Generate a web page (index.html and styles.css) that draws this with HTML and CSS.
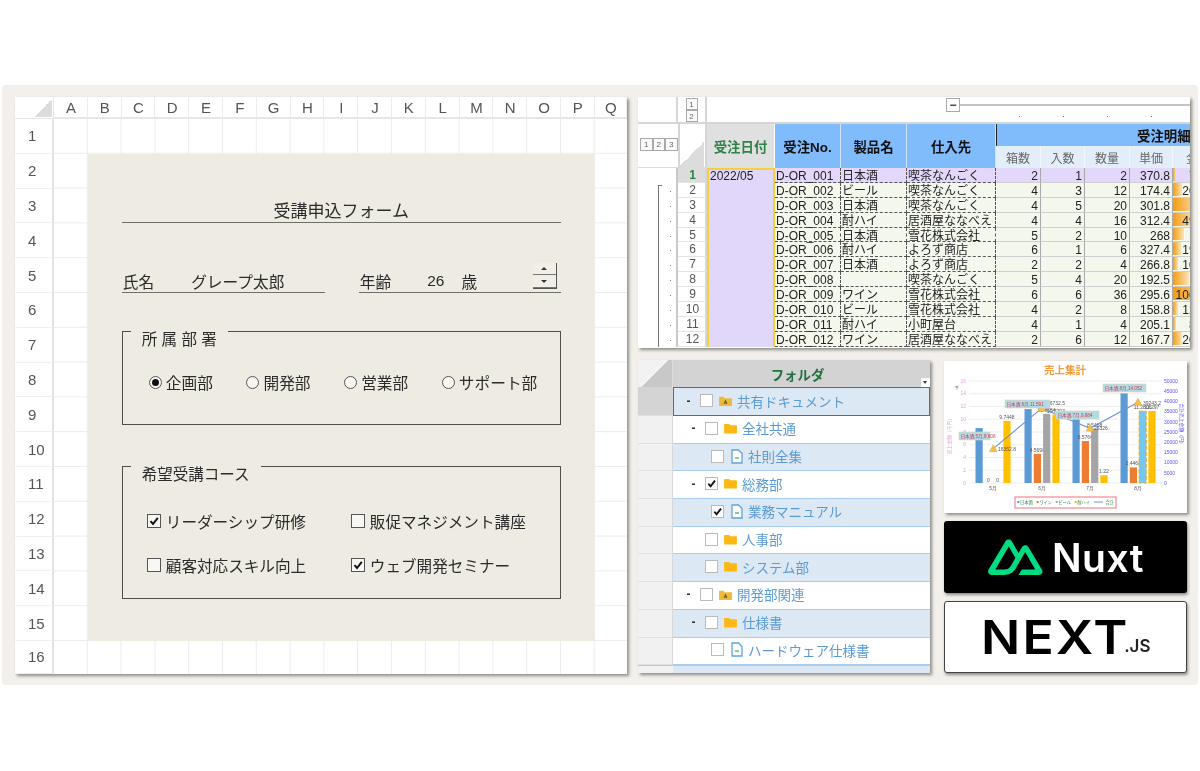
FILE: index.html
```html
<!DOCTYPE html>
<html lang="ja">
<head>
<meta charset="utf-8">
<title>受講申込フォーム</title>
<link rel="stylesheet" href="styles.css">
</head>
<body>
<main class="panel">
  <section class="sheet">
    <div class="corner"></div>
    <div class="ch">A</div><div class="ch">B</div><div class="ch">C</div><div class="ch">D</div><div class="ch">E</div><div class="ch">F</div><div class="ch">G</div><div class="ch">H</div><div class="ch">I</div><div class="ch">J</div><div class="ch">K</div><div class="ch">L</div><div class="ch">M</div><div class="ch">N</div><div class="ch">O</div><div class="ch">P</div><div class="ch">Q</div>
    <div class="rh">1</div><div class="rh">2</div><div class="rh">3</div><div class="rh">4</div><div class="rh">5</div><div class="rh">6</div><div class="rh">7</div><div class="rh">8</div><div class="rh">9</div><div class="rh">10</div><div class="rh">11</div><div class="rh">12</div><div class="rh">13</div><div class="rh">14</div><div class="rh">15</div><div class="rh">16</div>
    <div class="cells"></div>
    <form class="form">
      <h1 class="form-title">受講申込フォーム</h1>
      <div class="person">
        <div class="field name"><span>氏名</span><span class="name-value">グレープ太郎</span></div>
        <div class="field age">
          <span>年齢</span><span class="age-value">26</span><span class="age-unit">歳</span>
          <div class="spinner"><div class="spin-btn"><i class="tri up"></i></div><div class="spin-btn"><i class="tri down"></i></div></div>
        </div>
      </div>
      <fieldset class="group dept">
        <legend>所 属 部 署</legend>
        <div class="radios">
          <div class="radio"><i class="rd on"></i>企画部</div>
          <div class="radio"><i class="rd"></i>開発部</div>
          <div class="radio"><i class="rd"></i>営業部</div>
          <div class="radio"><i class="rd"></i>サポート部</div>
        </div>
      </fieldset>
      <fieldset class="group course">
        <legend>希望受講コース</legend>
        <div class="checks">
          <div class="check"><i class="cb"><svg viewBox="0 0 12 12"><path d="M2.500 6.200 5 9 9.800 2.800"/></svg></i>リーダーシップ研修</div>
          <div class="check"><i class="cb"></i>販促マネジメント講座</div>
          <div class="check"><i class="cb"></i>顧客対応スキル向上</div>
          <div class="check"><i class="cb"><svg viewBox="0 0 12 12"><path d="M2.500 6.200 5 9 9.800 2.800"/></svg></i>ウェブ開発セミナー</div>
        </div>
      </fieldset>
    </form>
  </section>

  <div class="right">
    <section class="orders">
      <div class="o-top">
        <div class="o-top-a"></div>
        <div class="o-top-b"><span class="lv">1</span><span class="lv">2</span></div>
        <div class="o-top-c"><span class="lv minus">−</span><span class="o-rule"></span>
          <div class="o-dots"><i></i><i></i><i></i><i></i></div>
        </div>
      </div>
      <div class="o-grid" id="orders">
        <div class="o-levels"><span class="lv">1</span><span class="lv">2</span><span class="lv">3</span></div>
        <div class="o-corner"></div>
        <div class="oh date">受注日付</div>
        <div class="oh blue">受注No.</div>
        <div class="oh blue">製品名</div>
        <div class="oh blue">仕入先</div>
        <div class="oh blue group-h">受注明細</div>
        <div class="osub">箱数</div><div class="osub">入数</div><div class="osub">数量</div><div class="osub">単価</div><div class="osub amount-h">金額</div>
        <div class="outline"><div class="bracket"></div></div>
        <div class="date-cell">2022/05</div>
      </div>
    </section>

    <div class="lower">
      <section class="tree">
        <div class="t-corner"></div>
        <div class="t-head">フォルダ<i class="t-filter"></i></div>
        <div class="t-rh first"></div>
        <div class="t-row blue sel l0"><b>-</b><i class="tc"></i><svg class="ic" viewBox="0 0 14 12"><path class="yf" d="M0 2h5l1 1.500h8V12H0z"/><path class="dk" d="M7 5 9.200 9.500H4.800z"/></svg><span>共有ドキュメント</span></div>
        <div class="t-rh"></div>
        <div class="t-row l1"><b>-</b><i class="tc"></i><svg class="ic" viewBox="0 0 14 12"><path class="of" d="M1 1h4.500l1.500 1.500h6.500q.5 0 .5.5v8q0 .5-.5.500H.5q-.5 0-.5-.5V2q0-1 1-1z"/></svg><span>全社共通</span></div>
        <div class="t-rh"></div>
        <div class="t-row blue l2"><i class="tc"></i><svg class="ic doc" viewBox="0 0 12 15"><path class="ds" d="M1 1h6.500L11 4.500V14H1z"/><path class="dg" d="M4 9h4"/></svg><span>社則全集</span></div>
        <div class="t-rh"></div>
        <div class="t-row l1"><b>-</b><i class="tc"><svg viewBox="0 0 12 12"><path d="M2.500 6.200 5 9 9.800 2.800"/></svg></i><svg class="ic" viewBox="0 0 14 12"><path class="of" d="M1 1h4.500l1.500 1.500h6.500q.5 0 .5.5v8q0 .5-.5.500H.5q-.5 0-.5-.5V2q0-1 1-1z"/></svg><span>総務部</span></div>
        <div class="t-rh"></div>
        <div class="t-row blue l2"><i class="tc"><svg viewBox="0 0 12 12"><path d="M2.500 6.200 5 9 9.800 2.800"/></svg></i><svg class="ic doc" viewBox="0 0 12 15"><path class="ds" d="M1 1h6.500L11 4.500V14H1z"/><path class="dg" d="M4 9h4"/></svg><span>業務マニュアル</span></div>
        <div class="t-rh"></div>
        <div class="t-row l1 nob"><i class="tc"></i><svg class="ic" viewBox="0 0 14 12"><path class="of" d="M1 1h4.500l1.500 1.500h6.500q.5 0 .5.5v8q0 .5-.5.500H.5q-.5 0-.5-.5V2q0-1 1-1z"/></svg><span>人事部</span></div>
        <div class="t-rh"></div>
        <div class="t-row blue l1 nob"><i class="tc"></i><svg class="ic" viewBox="0 0 14 12"><path class="of" d="M1 1h4.500l1.500 1.500h6.500q.5 0 .5.5v8q0 .5-.5.500H.5q-.5 0-.5-.5V2q0-1 1-1z"/></svg><span>システム部</span></div>
        <div class="t-rh"></div>
        <div class="t-row l0"><b>-</b><i class="tc"></i><svg class="ic" viewBox="0 0 14 12"><path class="yf" d="M0 2h5l1 1.500h8V12H0z"/><path class="dk" d="M7 5 9.200 9.500H4.800z"/></svg><span>開発部関連</span></div>
        <div class="t-rh"></div>
        <div class="t-row blue l1"><b>-</b><i class="tc"></i><svg class="ic" viewBox="0 0 14 12"><path class="of" d="M1 1h4.500l1.500 1.500h6.500q.5 0 .5.5v8q0 .5-.5.500H.5q-.5 0-.5-.5V2q0-1 1-1z"/></svg><span>仕様書</span></div>
        <div class="t-rh"></div>
        <div class="t-row l2"><i class="tc"></i><svg class="ic doc" viewBox="0 0 12 15"><path class="ds" d="M1 1h6.500L11 4.500V14H1z"/><path class="dg" d="M4 9h4"/></svg><span>ハードウェア仕様書</span></div>
        <div class="t-rh tail"></div>
        <div class="t-row blue tail"></div>
      </section>

      <div class="cards">
        <section class="chart" id="chart"></section>
        <section class="logo nuxt">
          <svg class="nuxt-mark" viewBox="0 0 61 40"><path fill-rule="evenodd" d="M33.900 40h22.500c.7 0 1.400-.2 2-.5.6-.3 1.200-.8 1.500-1.400.4-.6.6-1.300.6-2 0-.7-.2-1.400-.6-2L44.800 8.900c-.4-.6-.9-1.100-1.500-1.400-.6-.3-1.300-.5-2-.5s-1.400.2-2 .5c-.6.3-1.100.8-1.500 1.400l-3.900 6.700L26.400 2.500c-.4-.6-.9-1.100-1.500-1.400-.6-.3-1.300-.5-2-.5s-1.400.2-2 .5c-.6.3-1.100.8-1.500 1.400L.6 34c-.4.6-.6 1.300-.6 2 0 .7.2 1.400.6 2 .4.6.9 1.100 1.500 1.400.6.3 1.300.5 2 .5h14.100c5.600 0 9.700-2.500 12.500-7.200l6.900-11.900 3.700-6.300L52.400 34H37.500l-3.600 6zM17.900 34H8.100L23 8.300l7.400 12.900-5 8.600c-1.900 3.100-4.100 4.200-7.500 4.200z"/></svg>
          <span class="nuxt-word">Nuxt</span>
        </section>
        <section class="logo next"><span class="next-word">NEXT</span><span class="next-js">.JS</span></section>
      </div>
    </div>
  </div>
</main>
<script src="app.js"></script>
</body>
</html>
```
FILE: styles.css
```css
* { box-sizing: border-box; }
html, body { margin: 0; height: 100%; background: #fff; }
body { padding: 85px 2px 86px; font-family: "Liberation Sans", "Noto Sans CJK JP", sans-serif; color: #222; overflow: hidden; }
i { font-style: normal; display: block; }

.panel { height: 600px; background: #f3efea; border-radius: 4px; padding: 12px 8px 11px 13px; display: flex; gap: 11px; filter: blur(.35px); }

/* left sheet */
.sheet { width: 612px; height: 577px; background: #fff; box-shadow: 2px 2px 3px #8d8d88; display: grid; grid-template-columns: 39px repeat(16, 33.8px) 32.200px; grid-template-rows: 22px repeat(15, 34.800px) 33px; }
.corner { border-right: 1px solid #e4e4e4; border-bottom: 1px solid #e4e4e4; background: linear-gradient(135deg, #fff 50%, #dcdcdc 50%); background-size: 18px 18px; background-position: right 1px bottom 1px; background-repeat: no-repeat; }
.ch { display: flex; align-items: center; justify-content: center; font-size: 15px; color: #555; border-right: 1px solid #ececec; border-bottom: 2px solid #e6e6e6; padding-left: 1px; }
.rh { grid-column: 1; display: flex; align-items: center; padding-left: 13px; font-size: 15px; color: #555; border-right: 2px solid #e4e4e4; border-bottom: 1px solid #f0f0f0; }
.cells { grid-column: 2 / -1; grid-row: 2 / -1; background-image: linear-gradient(to right, #ececec 1px, transparent 1px), linear-gradient(to bottom, #ececec 1px, transparent 1px); background-size: 33.800px 34.800px; background-position: -1px -1px; }
.form { grid-column: 3 / 18; grid-row: 3 / 17; z-index: 1; background: #edebe2; padding: 0 34px; display: flex; flex-direction: column; }
.form-title { margin: 40px 0 0; height: 29px; border-bottom: 1px solid #6f6f68; font-size: 17px; line-height: 36px; font-weight: 400; text-align: center; color: #2b2b2b; }
.person { margin-top: 40px; display: flex; justify-content: space-between; align-items: flex-end; }
.field { position: relative; display: flex; height: 30px; padding: 8px 0 0 1px; align-items: center; font-size: 15.700px; border-bottom: 1px solid #6f6f68; color: #2b2b2b; }
.name { width: 203px; }
.age { width: 202px; }
.name-value { margin-left: 37px; }
.age-value { margin-left: 36px; font-size: 15.500px; }
.age-unit { margin-left: 17px; }
.spinner { position: absolute; right: 4px; bottom: 3px; width: 24px; height: 26px; display: flex; flex-direction: column; gap: 1px; border-right: 1px solid #555; border-bottom: 1px solid #555; }
.spin-btn { flex: 1; display: flex; align-items: center; justify-content: center; border-bottom: 1px solid #777; background: #f0eee6; }
.tri { width: 0; height: 0; border-left: 3px solid transparent; border-right: 3px solid transparent; }
.tri.up { border-bottom: 3px solid #333; }
.tri.down { border-top: 3px solid #333; }
.group { margin: 0; padding: 0; border: 1px solid #4f4f4a; min-width: 0; }
.group legend { margin-left: 8px; padding: 16px 11px 0; font-size: 15.500px; line-height: 16px; color: #2b2b2b; white-space: pre; }
.dept { margin-top: 23px; height: 109px; }
.course { margin-top: 26px; height: 148px; }
.radios { display: flex; padding: 22px 0 0 26px; font-size: 15.700px; }
.radio { display: flex; align-items: center; gap: 4px; width: 97.700px; height: 26px; color: #2b2b2b; white-space: nowrap; }
.rd { width: 13px; height: 13px; border: 1px solid #555; border-radius: 50%; background: #f8f7f3; flex: none; position: relative; }
.rd.on::after { content: ""; position: absolute; inset: 2px; background: #111; border-radius: 50%; }
.checks { display: grid; grid-template-columns: 204px 1fr; padding: 25px 0 0 24px; row-gap: 18px; font-size: 15.600px; }
.check { display: flex; align-items: center; gap: 5px; height: 26px; color: #2b2b2b; white-space: nowrap; }
.cb { width: 14px; height: 14px; border: 1px solid #555; background: #f8f7f3; flex: none; }
.cb svg, .tc svg { display: block; width: 100%; height: 100%; }
.cb path, .tc path { fill: none; stroke: #111; stroke-width: 2; }

/* right */
.right { width: 552px; display: flex; flex-direction: column; gap: 12px; }
.orders { height: 251px; background: #fff; box-shadow: 2px 2px 3px #8d8d88; overflow: hidden; }
.o-top { display: flex; height: 27px; border-bottom: 2px solid #d6d6d6; }
.o-top-a { width: 40px; border-right: 2px solid #d6d6d6; }
.o-top-b { width: 29px; border-right: 2px solid #d6d6d6; display: flex; flex-direction: column; align-items: center; padding-top: 1px; }
.o-top-c { flex: 1; position: relative; padding-left: 239px; display: flex; align-items: flex-start; padding-top: 1px; }
.lv { display: flex; align-items: center; justify-content: center; width: 12px; height: 12px; border: 1px solid #aaa; font-size: 8px; color: #666; background: #fafafa; }
.minus { width: 14px; height: 14px; font-size: 12px; color: #333; font-weight: 700; background: #fff; }
.o-rule { flex: 1; height: 2px; margin-top: 6px; background: #c4c4c4; }
.o-dots { position: absolute; left: 312px; top: 19px; display: flex; gap: 43px; }
.o-dots i { width: 1px; height: 1px; background: #777; }
.o-grid { display: grid; grid-template-columns: 40px 29px 68px 66px 66px 89px 45px 44px 45px 43px 17px; grid-template-rows: 22px 22px repeat(12, 14.900px); }
.o-levels { grid-column: 1; grid-row: 1 / 3; display: flex; align-items: center; padding: 0 0 3px 2px; background: #fff; border-bottom: 1px solid #ddd; }
.o-levels .lv { width: 12.500px; height: 13px; }
.o-corner { grid-column: 2; grid-row: 1 / 3; background: linear-gradient(135deg, #fff 50%, #dcdcdc 50%); background-size: 25px 25px; background-position: right 1px bottom 0; background-repeat: no-repeat; border-left: 2px solid #d6d6d6; border-right: 2px solid #d6d6d6; border-bottom: 1px solid #ddd; }
.oh { grid-row: 1 / 3; display: flex; align-items: center; justify-content: center; font-size: 13.400px; font-weight: 700; color: #111; border-right: 1px solid #d2e3f8; }
.oh.date { background: #e0e0e0; color: #2f8248; border-right: 1px solid #fff; }
.oh.blue { background: #80bbfc; }
.oh.group-h { grid-column: 7 / -1; grid-row: 1; border-left: 1px solid #222; border-right: 0; white-space: nowrap; overflow: hidden; padding-left: 140px; justify-content: flex-start; }
.osub { grid-row: 2; background: #e3eefa; color: #666; font-size: 12px; display: flex; align-items: center; justify-content: center; border-right: 1px solid #f3f7fc; white-space: nowrap; overflow: hidden; }
.amount-h { justify-content: flex-start; padding-left: 13px; border-right: 0; }
.outline { grid-column: 1; grid-row: 3 / 15; position: relative; border-right: 2px solid #c9c9c9; }
.bracket { position: absolute; left: 20px; top: 17px; bottom: 0; width: 4px; border-left: 1px solid #777; border-top: 1px solid #777; }
.rn { grid-column: 2; display: flex; align-items: center; justify-content: center; font-size: 12px; color: #555; border-right: 2px solid #d6d6d6; border-bottom: 1px solid #e4e4e4; padding-left: 2px; position: relative; }
.rn::before { content: ""; position: absolute; left: -8px; top: 8px; width: 1px; height: 1px; background: #777; }
.rn.first { background: #dcdcdc; color: #2f8248; font-weight: 700; }
.rn.first::before { display: none; }
.date-cell { grid-column: 3; grid-row: 3 / 15; background: #e0d7fa; border-left: 2px solid #f5cf3c; border-right: 2px solid #f5cf3c; border-top: 2px solid #f5cf3c; font-size: 12px; padding-left: 1px; line-height: 13px; color: #222; }
.c { font-size: 12px; line-height: 14px; height: 100%; background: #f4f7ec; border-bottom: 1px dashed #555; border-right: 1px dashed #555; color: #222; white-space: nowrap; padding: 1px 1px 0; }
.c.hl { background: #e3d8fb; }
.c.num { text-align: right; padding-right: 2px; border-right: 1px solid #a9a9a9; border-bottom: 1px solid #cfcfcf; }
.c.amount { padding: 1px 0 0; border-right: 0; border-bottom: 1px solid #cfcfcf; position: relative; overflow: hidden; }
.bar { position: absolute; left: 0; top: 0; bottom: 1px; background: linear-gradient(to right, #f39c12, #fde3b8); }
.val { position: relative; display: block; width: 46px; text-align: right; }

.lower { flex: 1; display: flex; gap: 14px; }
.tree { width: 292px; height: 313px; overflow: hidden; background: #fff; box-shadow: 2px 2px 3px #8d8d88; display: grid; grid-template-columns: 35px 1fr; grid-template-rows: 27px 29px repeat(9, 27.700px) 8px; }
.t-corner { background: linear-gradient(135deg, #f2f2f2 50%, #c8c8c8 50%); border-right: 1px solid #ddd; background-color: #f2f2f2; }
.t-head { position: relative; background: #d3d3d3; display: flex; align-items: center; justify-content: center; font-size: 13.400px; font-weight: 700; color: #23703f; padding-right: 8px; }
.t-filter { position: absolute; right: 0; bottom: 0; width: 9px; height: 9px; background: #fff; }
.t-filter::after { content: ""; position: absolute; left: 2px; top: 3px; border-left: 2.500px solid transparent; border-right: 2.500px solid transparent; border-top: 3px solid #336; }
.t-rh { background: #f1f1f1; border-bottom: 1px solid #e0e0e0; border-right: 1px solid #d8d8d8; }
.t-rh.first { background: #d4d4d4; }
.t-row { display: flex; align-items: center; background: #fff; border-bottom: 1px solid #a8cdee; font-size: 13.500px; color: #5b9bd5; white-space: nowrap; padding-bottom: 2px; }
.t-row.blue { background: #dce9f5; }
.t-row.sel { border: 1px solid #2e8b57; }
.t-row b { width: 7px; font-weight: 700; color: #333; font-size: 12px; text-align: center; }
.t-row.l0 { padding-left: 12px; }
.t-row.l1 { padding-left: 17px; }
.t-row.l1.nob { padding-left: 32px; }
.t-row.l2 { padding-left: 38px; }
.t-row.sel.l0 { padding-left: 11px; }
.tc { width: 13px; height: 13px; margin-left: 8px; border: 1px solid #bbb; background: #fff; flex: none; }
.t-row.l2 .tc, .t-row.nob .tc { margin-left: 0; }
.ic { width: 13px; height: 11px; margin: 0 5px 0 6px; flex: none; }
.ic.doc { width: 12px; height: 15px; margin-left: 7px; }
.yf { fill: #ecb93c; }
.dk { fill: #6b6338; }
.of { fill: #fdb813; }
.ds { fill: #fff; stroke: #5ba5dc; stroke-width: 1.300; }
.dg { stroke: #5fb58e; stroke-width: 1.500; fill: none; }
.t-row.tail, .t-rh.tail { border: 0; border-top: 1px solid #a8cdee; }

.cards { width: 243px; display: flex; flex-direction: column; gap: 8px; padding-top: 1px; }
.chart { height: 152px; background: #fff; box-shadow: 2px 2px 3px #8d8d88; }
.chart svg { display: block; width: 243px; height: 152px; filter: blur(.55px); }
.logo { flex: none; display: flex; align-items: flex-end; border-radius: 3px; box-shadow: 1px 2px 3px #8d8d88; }
.nuxt { height: 72px; background: #000; align-items: center; padding-left: 44px; gap: 9px; }
.nuxt-mark { width: 55px; height: 36px; fill: #00dc82; flex: none; }
.nuxt-word { color: #fff; font-family: Inter, "Liberation Sans", sans-serif; font-weight: 600; font-size: 39px; line-height: 1; letter-spacing: .5px; }
.next { height: 72px; background: #fff; border: 1px solid #444; padding: 0 0 18px 36px; }
.next-word { font-family: Inter, "Liberation Sans", sans-serif; font-weight: 600; font-size: 47px; line-height: 34px; color: #000; letter-spacing: 2px; transform: scaleX(1.1); transform-origin: left center; }
.next-js { font-family: Inter, "Liberation Sans", sans-serif; font-weight: 600; font-size: 17px; line-height: 15px; color: #222; margin-left: 8px; }
```
FILE: app.js
```js
// 受注明細の行
var rows = [
  ["D-OR_001","日本酒","喫茶なんごく",2,1,2,370.8],
  ["D-OR_002","ビール","喫茶なんごく",4,3,12,174.4],
  ["D-OR_003","日本酒","喫茶なんごく",4,5,20,301.8],
  ["D-OR_004","酎ハイ","居酒屋ななべえ",4,4,16,312.4],
  ["D-OR_005","日本酒","雪花株式会社",5,2,10,268],
  ["D-OR_006","酎ハイ","よろず商店",6,1,6,327.4],
  ["D-OR_007","日本酒","よろず商店",2,2,4,266.8],
  ["D-OR_008","","喫茶なんごく",5,4,20,192.5],
  ["D-OR_009","ワイン","雪花株式会社",6,6,36,295.6],
  ["D-OR_010","ビール","雪花株式会社",4,2,8,158.8],
  ["D-OR_011","酎ハイ","小町屋台",4,1,4,205.1],
  ["D-OR_012","ワイン","居酒屋ななべえ",2,6,12,167.7]
];
var grid = document.getElementById("orders");
function cell(cls, text, col, row) {
  var d = document.createElement("div");
  d.className = cls;
  d.textContent = text;
  d.style.gridColumn = col;
  d.style.gridRow = row;
  // 下の行の背景が下線文字を隠さないよう、上の行を手前に置く
  d.style.zIndex = 20 - row;
  grid.appendChild(d);
  return d;
}
var maxAmount = 10641.6;
rows.forEach(function (r, i) {
  var row = i + 3, hl = i === 0 ? " hl" : "";
  cell("rn" + (i === 0 ? " first" : ""), i + 1, 2, row);
  cell("c" + hl, r[0], 4, row);
  cell("c" + hl, r[1], 5, row);
  cell("c" + hl, r[2], 6, row);
  for (var k = 3; k < 7; k++) cell("c num" + hl, r[k], k + 4, row);
  var total = Math.round(r[5] * r[6] * 10) / 10;
  var amount = cell("c amount" + hl, "", 11, row);
  var bar = document.createElement("div");
  bar.className = "bar";
  bar.style.width = (total / maxAmount * 45) + "px";
  var v = document.createElement("span");
  v.className = "val";
  v.textContent = total;
  amount.appendChild(bar);
  amount.appendChild(v);
});

// 売上集計グラフ
var NS = "http://www.w3.org/2000/svg";
var s = [];
var px0 = 25, px1 = 218, py0 = 122, py1 = 20, u = (py0 - py1) / 16;
function T(x, y, t, size, fill, anchor, extra) {
  s.push('<text x="' + x + '" y="' + y + '" font-size="' + size + '" fill="' + fill + '" text-anchor="' + (anchor || "middle") + '" ' + (extra || "") + '>' + t + "</text>");
}
T(121, 13, "売上集計", 10.500, "#f59a3c", "middle", 'font-weight="700"');
for (var t = 0; t <= 8; t++) {
  var y = py0 - t * 2 * u;
  s.push('<line x1="' + px0 + '" x2="' + px1 + '" y1="' + y + '" y2="' + y + '" stroke="#eee" stroke-width="1"/>');
  T(22, y + 1.700, t * 2, 5, "#e79ae0", "end");
}
for (var q = 0; q <= 10; q++) {
  T(220, py0 - q * (py0 - py1) / 10 + 1.700, q * 5000, 5, "#5a50f0", "start");
}
T(13, 29, "千", 4, "#444");
T(7, 74, "売上金額（千円）", 4.800, "#e79ae0", "middle", 'transform="rotate(-90 7 74)"');
T(236, 64, "合計売上金額（円）", 4.800, "#5a50f0", "middle", 'transform="rotate(90 236 64)"');
var groups = [49, 98, 146, 194];
var names = ["5月", "6月", "7月", "8月"];
var colors = ["#5b9bd5", "#ed7d31", "#a5a5a5", "#ffc000"];
var vals = [[8.608, 0, 0, 9.7448], [11.591, 4.5698, 10.8554, 10.7293], [9.984, 6.5766, 8.5488, 1.22], [14.052, 2.4468, 11.2806, 11.297]];
groups.forEach(function (g, i) {
  T(g, 129, names[i], 4.800, "#555");
  vals[i].forEach(function (v, k) {
    var x = g - 17.500 + k * 9.300, h = v * u;
    if (v > 0) {
      var fill = colors[k];
      if (i === 3 && k === 2) fill = "#74c7ee";
      var extra = i === 3 && k === 2 ? ' stroke="#f7a81b" stroke-width="1" stroke-dasharray="4 2"' : "";
      s.push('<rect x="' + x + '" y="' + (py0 - h) + '" width="7.200" height="' + h + '" fill="' + fill + '"' + extra + '/>');
      if (k > 0) T(x + 3.500, py0 - h - 2, String(v), 5, "#555");
    } else {
      T(x + 3.500, py0 - 1, "0", 5, "#555");
    }
  });
});
var pts = [[49.300, 87.700], [97.700, 47.300], [146, 67.300], [194, 41.300]];
s.push('<polyline points="' + pts.map(function (p) { return p.join(","); }).join(" ") + '" fill="none" stroke="#6f95d6" stroke-width="1.100"/>');
pts.forEach(function (p) {
  s.push('<path d="M' + p[0] + " " + (p[1] - 4) + "l4 7h-8z" + '" fill="#f2bf4a" stroke="#d9a227" stroke-width=".4"/>');
});
T(54, 90, "16352.8", 5, "#555", "start");
T(103, 44, "36732.5", 5, "#555", "start");
T(150, 69, "26326", 5, "#555", "start");
T(199, 44, "39243.2", 5, "#555", "start");
[[15, 71, "日本酒,5月,8.608", 31], [61, 39, "日本酒,6月,11.591", 45], [112, 50, "日本酒,7月,9.984", 43], [159, 23, "日本酒,8月,14.052", 43]].forEach(function (l) {
  s.push('<rect x="' + l[0] + '" y="' + l[1] + '" width="' + l[3] + '" height="8" fill="#b2dbe8" stroke="#ddd8b0" stroke-width=".6"/>');
  T(l[0] + 1.500, l[1] + 5.800, l[2], 4.600, "#d8344a", "start");
});
s.push('<rect x="71" y="136" width="101" height="11" fill="#fff" stroke="#f08a96" stroke-width="1.200"/>');
[["日本酒", "#5b9bd5", 73.300], ["ワイン", "#ed7d31", 92.700], ["ビール", "#a5a5a5", 111.700], ["酎ハイ", "#ffc000", 130.700]].forEach(function (l) {
  s.push('<rect x="' + l[2] + '" y="140" width="2" height="2" fill="' + l[1] + '"/>');
  T(l[2] + 2.700, 143, l[0], 4.200, "#2f8248", "start");
});
s.push('<line x1="150" x2="159" y1="141" y2="141" stroke="#6f95d6" stroke-width="1"/>');
T(161.500, 143, "合計", 4.200, "#2f8248", "start");
document.getElementById("chart").innerHTML = '<svg xmlns="' + NS + '" viewBox="0 0 243 152">' + s.join("") + "</svg>";
```
